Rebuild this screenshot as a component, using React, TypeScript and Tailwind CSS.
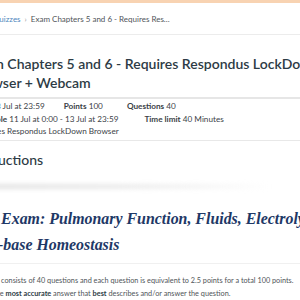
export default function App() {
  return (
    <div className="w-[300px] h-[300px] overflow-hidden bg-white font-['Lato','Liberation_Sans',sans-serif] text-[#2d3b45]">
      <div className="h-[3px] bg-[#f8d3b2]" />

      {/* breadcrumb */}
      <nav className="h-[32px] ml-[-7px] flex items-center whitespace-nowrap border-b border-[#ececec] text-[8px]">
        <span className="text-[#4d86bd]">Quizzes</span>
        <span className="mx-[4px] text-[#a0a0a0]">›</span>
        <span className="text-[#4f5559]">Exam Chapters 5 and 6 - Requires Res...</span>
      </nav>

      <div className="ml-[-30px] w-[400px] whitespace-nowrap">
        <h1 className="pt-[19px] pb-[5px] text-[14px] font-semibold leading-[19px] text-[#2d3b45]">
          Exam Chapters 5 and 6 - Requires Respondus LockDown
          <br />
          Browser + Webcam
        </h1>
        <div className="h-[2px] bg-[#e6e6e6]" />

        {/* quiz details */}
        <div className="pt-[1px] pb-[2px] border-b border-[#e8e8e8] w-[330px]">
          <div className="ml-[4px] text-[8.2px] leading-[12.5px] text-[#3b4247]">
            <div className="flex">
              <span><b className="font-bold">Due</b> 13 Jul at 23:59</span>
              <span className="ml-[19px]"><b className="font-bold">Points</b> 100</span>
              <span className="ml-[24px]"><b className="font-bold">Questions</b> 40</span>
            </div>
            <div className="flex">
              <span><b className="font-bold">Available</b> 11 Jul at 0:00 - 13 Jul at 23:59</span>
              <span className="ml-[26px]"><b className="font-bold">Time limit</b> 40 Minutes</span>
            </div>
            <div>Requires Respondus LockDown Browser</div>
          </div>
        </div>

        <h2 className="pt-[9px] text-[14px] leading-[20px] font-medium text-[#2d3b45]">Instructions</h2>
        <div className="mt-[14px] h-[5px] w-[300px] bg-linear-to-r from-[#e2e2e2] via-[#ebebeb] to-transparent blur-[2px]" />

        {/* instructions body */}
        <div className="pt-[17px] pb-[5px] ml-[-2px] font-['Liberation_Serif',serif] italic font-bold text-[15.9px] leading-[26px] text-[#1e3866]">
          Unit Exam: Pulmonary Function, Fluids, Electrolytes and
          <br />
          Acid-base Homeostasis
        </div>
        <div className="h-px w-[340px] bg-[#f0f0f0]" />
        <div className="pt-[10px] ml-[-3px] text-[7.3px] leading-[13px] text-[#4f5559]">
          <p>This exam consists of 40 questions and each question is equivalent to 2.5 points for a total 100 points.</p>
          <p>Choose the <b className="font-bold text-[#2d3b45]">most accurate</b> answer that <b className="font-bold text-[#2d3b45]">best</b> describes and/or answer the question.</p>
        </div>
      </div>
    </div>
  )
}
